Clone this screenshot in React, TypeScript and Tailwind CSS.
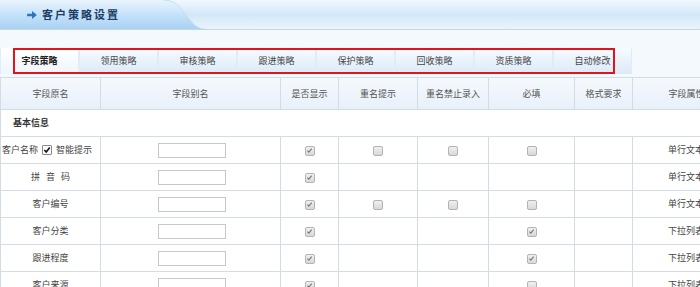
import React from 'react';

const tabs = ['字段策略', '领用策略', '审核策略', '跟进策略', '保护策略', '回收策略', '资质策略', '自动修改'];

const cols = [
  { name: '字段原名', w: 'w-[100px]' },
  { name: '字段别名', w: 'w-[180px]' },
  { name: '是否显示', w: 'w-[58px]' },
  { name: '重名提示', w: 'w-[79px]' },
  { name: '重名禁止录入', w: 'w-[71px]' },
  { name: '必填', w: 'w-[86px]' },
  { name: '格式要求', w: 'w-[58px]' },
  { name: '字段属性', w: 'w-[108px]' },
];

// null = 无复选框, true = 已勾选(只读), false = 未勾选
type Cell = boolean | null;

interface Row {
  label: React.ReactNode;
  show: Cell;
  dupTip: Cell;
  dupBlock: Cell;
  required: Cell;
  kind: string;
}

function CheckBox({ checked, active }: { checked?: boolean; active?: boolean }) {
  if (active) {
    return (
      <span className="inline-flex w-[10px] h-[10px] items-center justify-center border border-[#8a8a8a] bg-white rounded-[1px]">
        <svg width="8" height="8" viewBox="0 0 9 9">
          <path d="M1.5 4.5 L3.6 6.8 L7.6 1.8" fill="none" stroke="#111" strokeWidth="1.8" />
        </svg>
      </span>
    );
  }
  return (
    <span className="inline-flex w-[10px] h-[10px] items-center justify-center border border-[#b4b4b4] bg-gradient-to-b from-[#f0f0f0] to-[#d8d8d8] rounded-[2px]">
      {checked && (
        <svg width="7" height="7" viewBox="0 0 9 9">
          <path d="M1.8 4.6 L3.7 6.6 L7.3 2.2" fill="none" stroke="#7a7a7a" strokeWidth="1.5" />
        </svg>
      )}
    </span>
  );
}

const rows: Row[] = [
  {
    label: (
      <span className="flex items-center justify-start pl-[1px] gap-[4px]">
        客户名称
        <CheckBox checked active />
        智能提示
      </span>
    ),
    show: true,
    dupTip: false,
    dupBlock: false,
    required: false,
    kind: '单行文本',
  },
  { label: <span className="tracking-[6px] pl-[6px]">拼音码</span>, show: true, dupTip: null, dupBlock: null, required: null, kind: '单行文本' },
  { label: '客户编号', show: true, dupTip: false, dupBlock: false, required: false, kind: '单行文本' },
  { label: '客户分类', show: true, dupTip: null, dupBlock: null, required: true, kind: '下拉列表' },
  { label: '跟进程度', show: true, dupTip: null, dupBlock: null, required: true, kind: '下拉列表' },
  { label: '客户来源', show: true, dupTip: null, dupBlock: null, required: false, kind: '下拉列表' },
];

function Box({ v }: { v: Cell }) {
  if (v === null) return null;
  return <CheckBox checked={v} />;
}

export default function App() {
  const td = 'border border-[#d3dbe5] text-center h-[27px] p-0 align-middle whitespace-nowrap';

  return (
    <div
      className="w-[700px] h-[287px] overflow-hidden bg-[#f4f9fe] text-[9px] text-[#333]"
      style={{ fontFamily: '"Noto Sans CJK SC", "Noto Sans", sans-serif' }}
    >
      {/* 顶部标题栏 */}
      <div className="relative h-[30px] border-b border-[#c9d4de] bg-gradient-to-b from-[#f1f8fe] via-[#d3e7f8] to-[#eaf4fd]">
        <svg className="absolute left-0 top-0" width="210" height="29" viewBox="0 0 210 29" preserveAspectRatio="none">
          <defs>
            <linearGradient id="hd" x1="0" y1="0" x2="0" y2="1">
              <stop offset="0" stopColor="#eaf5fe" />
              <stop offset="0.55" stopColor="#c2e0f8" />
              <stop offset="1" stopColor="#a9d2f4" />
            </linearGradient>
          </defs>
          <path d="M0 0 H163 C178 0 182 10 190 20 C195 26 199 29 206 29 H0 Z" fill="url(#hd)" />
          <path d="M163 0 C178 0 182 10 190 20 C195 26 199 29 206 29" fill="none" stroke="#c6dff2" strokeWidth="1" />
        </svg>
        <div className="relative flex items-center h-full pl-[27px] gap-[5px]">
          <svg width="10" height="8" viewBox="0 0 11 9">
            <path d="M0 3 H5.5 V0 L11 4.5 L5.5 9 V6 H0 Z" fill="#2f74c0" />
          </svg>
          <span className="font-bold text-[11px] text-[#1d3d63] tracking-[2px]">客户策略设置</span>
        </div>
      </div>

      {/* 选项卡 */}
      <div className="relative mt-[18px] h-[26px] flex">
        {tabs.map((t, i) => (
          <div
            key={t}
            className={`w-[79px] shrink-0 h-full flex items-center justify-center border-x border-[#e2ecf6] ${
              i === 0
                ? 'bg-gradient-to-b from-white to-[#eef5fc] font-bold text-[#222]'
                : 'bg-gradient-to-b from-[#f7fbff] to-[#dbeaf7] text-[#444]'
            }`}
          >
            {t}
          </div>
        ))}
        <div className="absolute left-[13px] top-0 w-[602px] h-[26px] border-2 border-[#e0141a] pointer-events-none" />
      </div>

      {/* 字段表格 */}
      <div className="mt-[3px] bg-white">
        <table className="table-fixed border-collapse w-[740px]">
          <thead>
            <tr className="bg-gradient-to-b from-[#f5f9fd] to-[#e7f0f9]">
              {cols.map((c) => (
                <th key={c.name} className={`${c.w} ${td} h-[32px] font-normal text-[#555]`}>
                  {c.name}
                </th>
              ))}
            </tr>
          </thead>
          <tbody>
            <tr>
              <td colSpan={8} className="border border-[#d3dbe5] h-[27px] pl-[12px] font-bold text-[#333]">
                基本信息
              </td>
            </tr>
            {rows.map((r, i) => (
              <tr key={i}>
                <td className={`${td} text-[#444]`}>{r.label}</td>
                <td className={td}>
                  <div className="flex justify-center pl-[2px]">
                    <input type="text" className="w-[68px] h-[15px] border border-[#c7c7c7] bg-white" />
                  </div>
                </td>
                <td className={td}>
                  <div className="flex justify-center pt-[1px]"><Box v={r.show} /></div>
                </td>
                <td className={td}>
                  <div className="flex justify-center pt-[1px]"><Box v={r.dupTip} /></div>
                </td>
                <td className={td}>
                  <div className="flex justify-center pt-[1px]"><Box v={r.dupBlock} /></div>
                </td>
                <td className={td}>
                  <div className="flex justify-center pt-[1px]"><Box v={r.required} /></div>
                </td>
                <td className={td}></td>
                <td className={`${td} text-left pl-[35px] text-[#444]`}>{r.kind}</td>
              </tr>
            ))}
          </tbody>
        </table>
      </div>
    </div>
  );
}
